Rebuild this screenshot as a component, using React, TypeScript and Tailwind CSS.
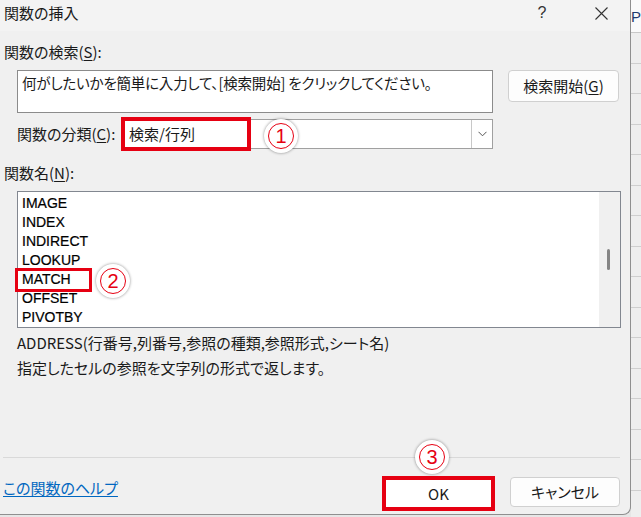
import React from "react";

const jp = "font-['Noto_Sans_CJK_JP',sans-serif] [font-feature-settings:'palt']";

function Num({ n }: { n: string }) {
  return (
    <div className="w-[34px] h-[34px] rounded-full bg-white shadow-[0_0_3px_rgba(0,0,0,0.45)] flex items-center justify-center">
      <div className="w-[26px] h-[26px] rounded-full border-[1.5px] border-[#e60012] flex items-center justify-center text-[#e60012] text-[20px] leading-none font-['Liberation_Sans',sans-serif]">
        {n}
      </div>
    </div>
  );
}

const items = ["IMAGE", "INDEX", "INDIRECT", "LOOKUP", "MATCH", "OFFSET", "PIVOTBY"];

export default function App() {
  return (
    <div className={`flex w-[641px] h-[517px] bg-[#e6e6e6] overflow-hidden text-[15px] text-[#1a1a1a] ${jp}`}>
      <div className="w-[631px] h-[515px] shrink-0 flex flex-col bg-[#f0f0f0] border-r border-b border-[#8f8f8f] rounded-br-[8px]">
        {/* title bar */}
        <div className="h-[31px] shrink-0 bg-[#f3f3f3] flex items-center pb-[5px] pl-[4px]">
          <span className="flex-1 leading-[20px]">関数の挿入</span>
          <span className="w-[46px] text-center leading-[20px] text-[16px] font-['Liberation_Sans',sans-serif] text-[#333]">?</span>
          <span className="w-[46px] ml-[13px] mr-[6px] flex justify-center">
            <svg width="13" height="13" viewBox="0 0 13 13">
              <path d="M0.5 0.5 L12.5 12.5 M12.5 0.5 L0.5 12.5" stroke="#333" strokeWidth="1.1" fill="none" />
            </svg>
          </span>
        </div>

        <div className="mt-[11px] ml-[4px] leading-[20px]">
          関数の検索(<span className="underline underline-offset-2">S</span>):
        </div>

        <div className="mt-[8px] ml-[17px] flex items-start">
          <div className="w-[476px] h-[43px] bg-white border border-[#8b8b8b] pl-[4px] pt-[2px] leading-[20px] text-[14.5px] tracking-[-0.2px]">
            何がしたいかを簡単に入力して、[検索開始] をクリックしてください。
          </div>
          <div className="ml-[15px] w-[111px] h-[32px] rounded-[4px] border border-[#d0d0d0] bg-[#fdfdfd] flex items-center justify-center leading-[20px]">
            検索開始(<span className="underline underline-offset-2">G</span>)
          </div>
        </div>

        <div className="mt-[6px] ml-[17px] flex items-center h-[30px]">
          <div className="w-[104px] leading-[20px]">
            関数の分類(<span className="underline underline-offset-2">C</span>):
          </div>
          <div className="relative w-[372px] h-[30px] bg-white border border-[#a0a0a0] flex items-center">
            <span className="pl-[7px] flex-1 leading-[20px]">検索/行列</span>
            <div className="w-[21px] h-[28px] border-l border-[#c8c8c8] bg-white flex items-center justify-center">
              <svg width="9" height="6" viewBox="0 0 9 6">
                <path d="M0.5 0.8 L4.5 4.8 L8.5 0.8" stroke="#555" strokeWidth="1" fill="none" />
              </svg>
            </div>
            <div className="absolute left-[-1px] top-[-3px] w-[130px] h-[34px] border-[4px] border-[#e60012]" />
            <div className="absolute left-[142px] top-[-1px]">
              <Num n="1" />
            </div>
          </div>
        </div>

        <div className="mt-[14px] ml-[4px] leading-[20px]">
          関数名(<span className="underline underline-offset-2">N</span>):
        </div>

        <div className="mt-[8px] ml-[17px] w-[604px] h-[137px] bg-white border border-[#828790] flex">
          <div className="flex-1 pt-[2px] flex flex-col font-['Liberation_Sans',sans-serif] text-[14px] text-black [-webkit-text-stroke:0.2px_black]">
            {items.map((it) => (
              <div key={it} className="relative h-[19px] leading-[19px] pl-[4px]">
                {it}
                {it === "MATCH" && (
                  <>
                    <div className="absolute left-[-3px] top-[-2px] w-[77px] h-[24px] border-[3.5px] border-[#e60012]" />
                    <div className="absolute left-[78px] top-[-6px] [-webkit-text-stroke:0px]">
                      <Num n="2" />
                    </div>
                  </>
                )}
              </div>
            ))}
          </div>
          <div className="w-[21px] bg-[#f0f0f0] pt-[57px] pl-[8px]">
            <div className="w-[3px] h-[21px] rounded-full bg-[#858585]" />
          </div>
        </div>

        <div className="mt-[5px] ml-[17px] leading-[20px]">
          ADDRESS(行番号,列番号,参照の種類,参照形式,シート名)
        </div>
        <div className="mt-[5px] ml-[17px] leading-[20px]">
          指定したセルの参照を文字列の形式で返します。
        </div>

        <div className="mt-[79px] ml-[3px] w-[617px] h-px bg-[#d9d9d9]" />

        <div className="flex items-start">
          <div className="ml-[3px] mt-[20px] leading-[20px] text-[#0067c0] underline underline-offset-2">
            この関数のヘルプ
          </div>
          <div className="ml-auto mt-[18px] relative w-[113px] h-[35px] border-[4px] border-[#e60012] bg-white flex items-center justify-center">
            <span className="leading-[20px]">OK</span>
            <div className="absolute left-[29px] top-[-40px]">
              <Num n="3" />
            </div>
          </div>
          <div className="ml-[15px] mr-[10px] mt-[19px] w-[110px] h-[30px] rounded-[4px] border border-[#d0d0d0] bg-[#fdfdfd] flex items-center justify-center leading-[20px]">
            キャンセル
          </div>
        </div>
      </div>

      {/* spreadsheet strip behind */}
      <div className="w-[10px] shrink-0 flex flex-col bg-[#eeeeee]">
        <div className="h-[33px] shrink-0 bg-[#fafafa] border-b border-[#c8c8c8] pt-[7px] text-[15px] leading-[20px] text-[#1f3b6e] font-['Liberation_Sans',sans-serif]">
          P
        </div>
        {Array.from({ length: 16 }).map((_, i) => (
          <div key={i} className="h-[30.5px] shrink-0 border-b border-[#cfcfcf]" />
        ))}
      </div>
    </div>
  );
}
